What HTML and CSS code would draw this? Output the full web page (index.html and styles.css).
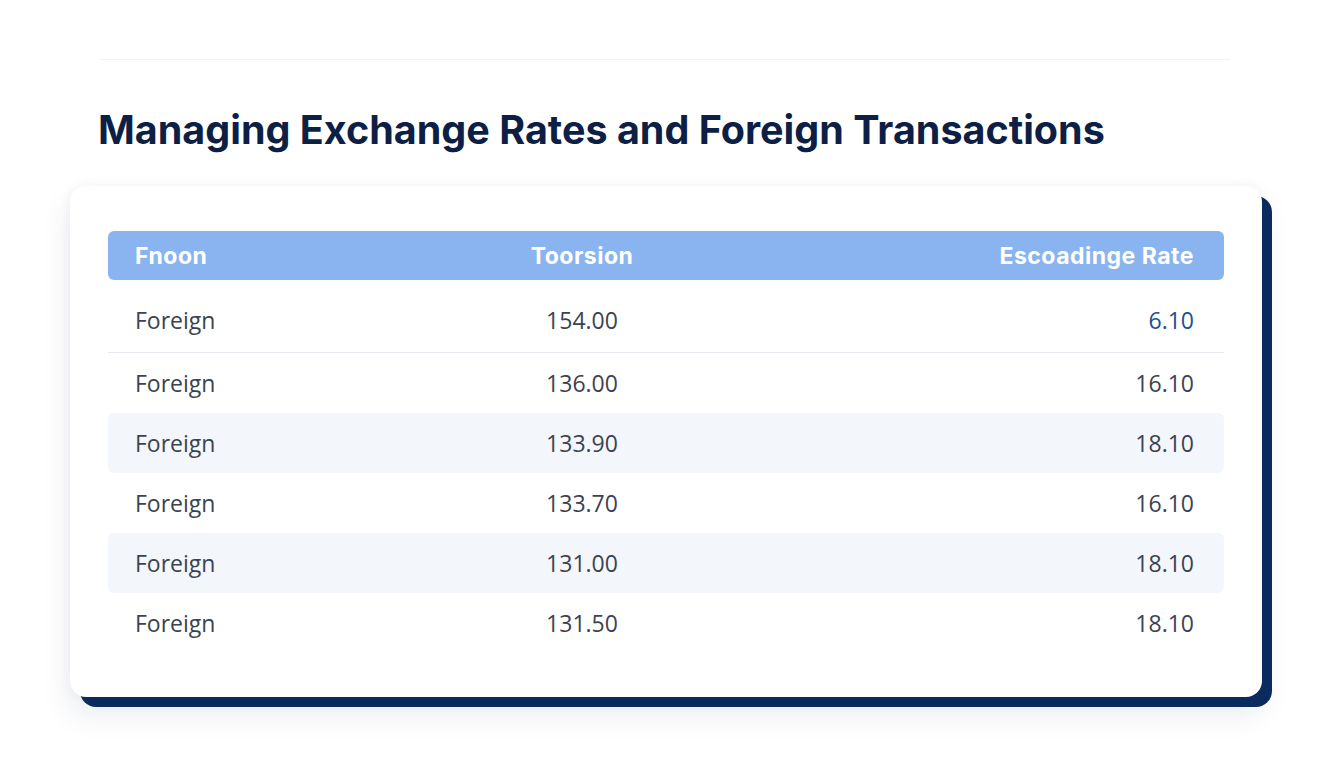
FILE: index.html
```html
<!DOCTYPE html>
<html lang="en">
<head>
<meta charset="utf-8">
<title>Managing Exchange Rates and Foreign Transactions</title>
<link rel="stylesheet" href="styles.css">
</head>
<body>
<div class="page">
  <div class="topline"></div>
  <h1 class="title">Managing Exchange Rates and Foreign Transactions</h1>
  <div class="card">
    <div class="table">
      <div class="row head">
        <div class="c1">Fnoon</div>
        <div class="c2">Toorsion</div>
        <div class="c3">Escoadinge Rate</div>
      </div>
      <div class="row first">
        <div class="c1">Foreign</div>
        <div class="c2">154.00</div>
        <div class="c3 accent">6.10</div>
      </div>
      <div class="row">
        <div class="c1">Foreign</div>
        <div class="c2">136.00</div>
        <div class="c3">16.10</div>
      </div>
      <div class="row stripe">
        <div class="c1">Foreign</div>
        <div class="c2">133.90</div>
        <div class="c3">18.10</div>
      </div>
      <div class="row">
        <div class="c1">Foreign</div>
        <div class="c2">133.70</div>
        <div class="c3">16.10</div>
      </div>
      <div class="row stripe">
        <div class="c1">Foreign</div>
        <div class="c2">131.00</div>
        <div class="c3">18.10</div>
      </div>
      <div class="row">
        <div class="c1">Foreign</div>
        <div class="c2">131.50</div>
        <div class="c3">18.10</div>
      </div>
    </div>
  </div>
</div>
</body>
</html>
```
FILE: styles.css
```css
* { box-sizing: border-box; }
html, body { margin: 0; padding: 0; }
body {
  background: #ffffff;
  font-family: "Open Sans", "Noto Sans", sans-serif;
  width: 1344px;
  height: 768px;
  overflow: hidden;
}
.page {
  padding: 59px 0 0 70px;
  width: 1344px;
}
.topline {
  margin-left: 30px;
  width: 1130px;
  height: 1px;
  background: #f1f3f6;
}
.title {
  margin: 48px 0 0 28px;
  font-family: "Inter", "Noto Sans", sans-serif;
  font-weight: 700;
  font-size: 39.5px;
  line-height: 44px;
  color: #0d1f45;
  letter-spacing: 0;
}
.card {
  margin-top: 34px;
  width: 1192px;
  height: 511px;
  background: #ffffff;
  border-radius: 16px;
  box-shadow: 10px 10px 0 #0b2a5e, 0 16px 30px rgba(30, 50, 90, 0.10), 0 0 12px rgba(30, 50, 90, 0.05);
  padding: 45px 38px 0 38px;
}
.table {
  display: flex;
  flex-direction: column;
}
.row {
  display: grid;
  grid-template-columns: 367px 160px 1fr;
  align-items: center;
  height: 60px;
  padding: 0 30px 0 27px;
  font-size: 23px;
  color: #3c4350;
  border-radius: 6px;
}
.row.head {
  height: 49px;
  background: #8ab4f0;
  color: #ffffff;
  font-weight: 700;
  font-size: 23px;
  letter-spacing: 0.5px;
  font-family: "Inter", "Noto Sans", sans-serif;
}
.row.first {
  height: 73px;
  padding-top: 8px;
  border-bottom: 1px solid #e6e9ee;
  border-radius: 0;
}
.row.stripe {
  background: #f3f7fc;
}
.c1 { text-align: left; }
.c2 { text-align: center; }
.c3 { text-align: right; }
.accent { color: #1d4f96; }
```
